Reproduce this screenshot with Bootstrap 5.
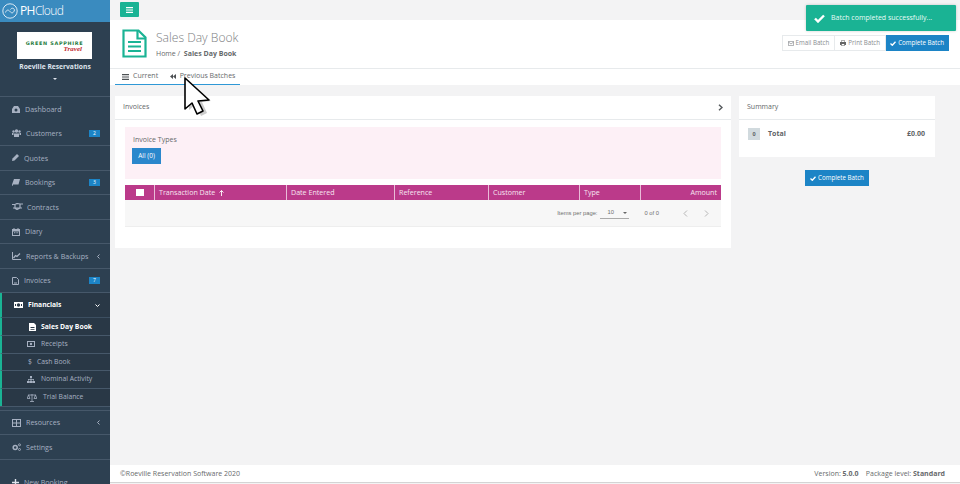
<!DOCTYPE html>
<html lang="en">
<head>
    <meta charset="UTF-8">
    <meta name="viewport" content="width=device-width, initial-scale=1">
    <title>Sales Day Book</title>
    <link href="https://cdn.jsdelivr.net/npm/bootstrap@5.3.3/dist/css/bootstrap.min.css" rel="stylesheet">
    <style>
        html, body { height: 484px; overflow: hidden; }
        body { background: #f3f3f4; color: #676a6c; font-family: "Open Sans", "Liberation Sans", sans-serif; font-size: 7px; }
        svg { display: block; flex: none; }
        .shell { height: 484px; }
        .side { width: 110px; height: 484px; background: #2d4051; color: #a7b1c2; overflow: hidden; flex: none; font-size: 7.1px; }
        .side-logo { height: 22px; flex: none; background: #3a8bbf; color: #fff; font-size: 12px; letter-spacing: -.6px; padding-left: 2px; gap: 2px; }
        .side-logo span { font-weight: 300; }
        .side-profile { height: 75px; flex: none; padding-top: 10px; border-bottom: 1px solid #46586a; color: #dfe4ed; font-weight: 700; font-size: 6.7px; }
        .brand-box { width: 75px; height: 27px; background: #fff; margin: 0 0 3px 17px; line-height: 1; padding-top: 3px; }
        .brand-top { color: #1e7a3c; font-size: 4.9px; font-weight: 800; letter-spacing: .7px; font-family: "DejaVu Sans", sans-serif; white-space: nowrap; }
        .brand-sub { color: #c1272d; font-size: 7px; font-style: italic; font-family: "Liberation Serif", serif; font-weight: 700; text-align: right; padding-right: 10px; }
        .caret-down { width: 0; height: 0; border: 2px solid transparent; border-top-color: #dfe4ed; border-bottom: 0; margin: 6px auto 0; }
        .menu-row { height: 24.55px; flex: none; border-bottom: 1px solid #46586a; padding: 0 10px 0 12px; gap: 5px; white-space: nowrap; }
        .menu-row.first { border: 0; }
        .menu-row.new-row { margin-top: 10px; }
        .menu-row.open { height: 25px; background: #293846; color: #fff; font-weight: 700; font-size: 6.7px; border-left: 2px solid #1ab394; padding-left: 12px; border-bottom-color: #3c4f61; }
        .sub-row { height: 17.6px; flex: none; background: #293846; border-bottom: 1px solid #46586a; border-left: 2px solid #1ab394; padding-left: 25px; gap: 6px; white-space: nowrap; font-size: 6.8px; }
        .sub-row.now { color: #fff; font-weight: 700; padding-left: 27px; gap: 5px; }
        .sub-row.cash { padding-left: 26px; gap: 5px; }
        .sub-row.end { border-bottom: 0; }
        .sub-end-gap { height: 4.5px; flex: none; border-top: 1px solid #46586a; border-bottom: 1px solid #46586a; }
        .count { background: #1c84c6; color: #fff; width: 11px; height: 7px; font-size: 5px; line-height: 7px; text-align: center; margin-left: auto; }
        .chev { margin-left: auto; }
        .main-col { min-width: 0; }
        .topline { height: 20px; padding: 2px 0 0 10px; }
        .menu-btn { width: 19px; height: 15px; background: #1ab394; border-radius: 1px; }
        .page-head { height: 48px; background: #fff; padding: 9px 11px 0 12px; gap: 9px; }
        .page-title { font-size: 12.1px; font-weight: 300; color: #7d8083; line-height: 17px; }
        .crumbs { font-size: 7px; line-height: 10px; margin-top: 3px; }
        .btn-strip { margin-top: 6px; }
        .strip-btn { height: 16px; font-size: 6.2px; padding: 0 5px; gap: 2px; background: #fff; border: 1px solid #e7eaec; color: #8a8d90; white-space: nowrap; }
        .strip-btn + .strip-btn { border-left: 0; }
        .strip-btn.go { background: #1c84c6; border-color: #1c84c6; color: #fff; padding: 0 4px; }
        .tabbar { height: 17px; background: #fff; border-top: 1px solid #e7eaec; padding-left: 5px; }
        .tab-set { width: 125px; height: 16px; border-bottom: 1px solid #2f98d6; padding-left: 7px; gap: 11.5px; font-size: 7px; }
        .tab-one { gap: 4px; }
        .content-zone { padding: 11px 25px 0 5px; gap: 8px; }
        .panel-a { width: 616px; height: 152px; background: #fff; }
        .panel-head { height: 24px; border-bottom: 1px solid #e7eaec; padding: 0 8px; font-size: 7px; color: #63676a; }
        .panel-a-body { padding: 7px 10px 0; }
        .pink-box { height: 52px; background: #fdf0f6; padding: 8px 7px 0; }
        .types-label { line-height: 10px; margin-bottom: 3px; padding-left: 1px; }
        .all-btn { width: 29px; height: 16px; background: #2a87cc; color: #fff; line-height: 16px; text-align: center; font-size: 6.5px; }
        .grid-head { height: 15px; margin-top: 6px; background: #bb3a8a; color: #f6e6f1; font-size: 7.1px; }
        .cell { height: 15px; padding: 0 4px; border-right: 1px solid #e9bcd8; white-space: nowrap; }
        .cell:last-child { border: 0; flex: 1; justify-content: flex-end; }
        .tick { width: 8px; height: 7px; background: #fff; }
        .pager { height: 27px; background: #f7f7f7; border-bottom: 1px solid #eee; font-size: 5.8px; font-family: "Liberation Sans", sans-serif; color: #6f6f6f; padding-right: 12px; justify-content: flex-end; }
        .size-pick { width: 29px; height: 12px; border-bottom: 1px solid #aaa; margin: 0 15px 0 3px; padding: 0 2px 0 7px; justify-content: space-between; }
        .size-arrow { width: 0; height: 0; border: 2.5px solid transparent; border-top-color: #666; border-bottom: 0; }
        .panel-b { width: 196px; height: 61px; background: #fff; }
        .sum-row { padding: 8px 10px 0 9px; font-weight: 700; color: #5f6366; }
        .sum-num { width: 12px; height: 12px; background: #d1dade; text-align: center; line-height: 12px; font-size: 5.5px; margin-right: 8px; }
        .finish-btn { width: 64px; height: 16px; background: #1c84c6; color: #fff; margin: 13px auto 0; gap: 2px; font-size: 6.2px; justify-content: center; }
        .foot-bar { height: 18px; background: #fff; border-bottom: 1px solid #d4d4d4; padding: 2px 15px 0 10px; margin-bottom: 1px; font-size: 7px; }
        .toast-note { position: absolute; left: 806px; top: 5px; width: 150px; height: 26px; background: #1ab394; color: #e9fbf6; border-radius: 1px; padding-left: 8px; gap: 6px; font-size: 7px; box-shadow: 0 0 3px rgba(0,0,0,.2); }
        .pointer { position: absolute; left: 184px; top: 77px; }
    </style>
</head>
<body>
<div class="d-flex shell">
    <div class="side d-flex flex-column">
        <div class="side-logo d-flex align-items-center">
            <svg width="16" height="16" viewBox="0 0 16 16" fill="none" stroke="#dbeaf5" stroke-width="1"><circle cx="8" cy="8" r="7.2"/><path d="M3.500 9.500c1-3 3-3 4.500-1s3.500 2 4.500-1.500c-.5-2-3-2.500-4-.5"/></svg>
            <div>PH<span>Cloud</span></div>
        </div>
        <div class="side-profile text-center">
            <div class="brand-box d-flex flex-column justify-content-center">
                <div class="brand-top">GREEN SAPPHIRE</div>
                <div class="brand-sub">Travel</div>
            </div>
            <div>Roeville Reservations</div>
            <div class="caret-down"></div>
        </div>
        <div class="menu-row first d-flex align-items-center">
            <svg width="8" height="7" viewBox="0 0 8 7" fill="#a7b1c2"><path d="M0 7V3l2-3h4l2 3v4z"/><circle cx="4" cy="4" r="1.500" fill="#2d4051"/></svg>Dashboard
        </div>
        <div class="menu-row d-flex align-items-center">
            <svg width="9" height="8" viewBox="0 0 9 8" fill="#a7b1c2"><circle cx="4.500" cy="2" r="1.700"/><circle cx="1.500" cy="2.500" r="1.200"/><circle cx="7.500" cy="2.500" r="1.200"/><path d="M2 8V4.500h5V8zM0 6V4h1.500v2zM7.500 6V4H9v2z"/></svg>Customers<span class="count">2</span>
        </div>
        <div class="menu-row d-flex align-items-center">
            <svg width="7" height="7" viewBox="0 0 7 7" fill="#a7b1c2"><path d="M0 7l.5-2.500L5 0l2 2-4.500 4.500z"/></svg>Quotes
        </div>
        <div class="menu-row d-flex align-items-center">
            <svg width="8" height="7" viewBox="0 0 8 7" fill="#a7b1c2"><path d="M2 0h6L6.500 5.500H1L.5 7h6L6 7.500H0V5.500z"/></svg>Bookings<span class="count">3</span>
        </div>
        <div class="menu-row d-flex align-items-center" style="gap:4px">
            <svg width="11" height="7" viewBox="0 0 11 7" fill="none" stroke="#a7b1c2" stroke-width="1.200"><path d="M0 1.500h3l2-1 3 .5h3M1 5l1.500 0L5 6.500 8 5h2M3 1.500v3.500h5V1"/></svg>Contracts
        </div>
        <div class="menu-row d-flex align-items-center">
            <svg width="8" height="8" viewBox="0 0 8 8" fill="#a7b1c2"><path d="M0 1h1.500V0h1v1h3V0h1v1H8v7H0zM1 3.500V7h6V3.500z"/><path d="M2 4.200h1v1H2zM3.600 4.200h1v1h-1zM5.200 4.200h1v1h-1z"/></svg>Diary
        </div>
        <div class="menu-row d-flex align-items-center">
            <svg width="9" height="8" viewBox="0 0 9 8" fill="none" stroke="#a7b1c2"><path d="M.5 0v7.500H9"/><path d="M1.500 6L3.500 3.500l1.500 1L8 1.500" stroke-width="1.300"/></svg>Reports &amp; Backups
            <svg class="chev" width="3" height="5" viewBox="0 0 3 5" fill="none" stroke="#a7b1c2"><path d="M2.500.5L.5 2.500l2 2"/></svg>
        </div>
        <div class="menu-row d-flex align-items-center">
            <svg width="7" height="8" viewBox="0 0 7 8" fill="none" stroke="#a7b1c2"><path d="M.5.500h4l2 2v5h-6zM2 6h3"/></svg>Invoices<span class="count">7</span>
        </div>
        <div class="menu-row open d-flex align-items-center">
            <svg width="9" height="6" viewBox="0 0 9 6"><path d="M0 0h9v6H0z" fill="#fff"/><circle cx="4.500" cy="3" r="1.700" fill="#293846"/><path d="M1 2h1v2H1zM7 2h1v2H7z" fill="#293846"/></svg>Financials
            <svg class="chev" width="5" height="3" viewBox="0 0 5 3" fill="none" stroke="#fff"><path d="M.5.500l2 2 2-2"/></svg>
        </div>
        <div class="sub-row now d-flex align-items-center">
            <svg width="7" height="8" viewBox="0 0 7 8" fill="#fff"><path d="M0 0h5l2 2v6H0zM1.500 4v1h4V4zM1.500 6v.7h4V6z"/></svg>Sales Day Book
        </div>
        <div class="sub-row d-flex align-items-center">
            <svg width="8" height="6" viewBox="0 0 8 6" fill="#a7b1c2"><path d="M0 0h8v6H0zM1 1v4h6V1z"/><circle cx="4" cy="3" r="1.200"/></svg>Receipts
        </div>
        <div class="sub-row cash d-flex align-items-center"><span>$</span>Cash Book</div>
        <div class="sub-row d-flex align-items-center">
            <svg width="8" height="7" viewBox="0 0 8 7" fill="#a7b1c2"><path d="M3 0h2v2H4.300v1H7v2h1v2H5.500V5h1V3.700h-2V5h.8v2H2.700V5h.8V3.700h-2V5h1v2H0V5h1V3h2.700V2H3z"/></svg>Nominal Activity
        </div>
        <div class="sub-row end d-flex align-items-center">
            <svg width="10" height="8" viewBox="0 0 10 8" fill="none" stroke="#a7b1c2" stroke-width=".8"><path d="M5 0v7.500M3 7.500h4M1 1h8M.2 4.500L1.500 1l1.500 3.500zM7 4.500L8.500 1 9.800 4.500z"/></svg>Trial Balance
        </div>
        <div class="sub-end-gap"></div>
        <div class="menu-row d-flex align-items-center">
            <svg width="9" height="8" viewBox="0 0 9 8" fill="#a7b1c2"><path d="M0 0h9v8H0zM1 1v2.500h3V1zM5 1v2.500h3V1zM1 4.500V7h3V4.500zM5 4.500V7h3V4.500z"/></svg>Resources
            <svg class="chev" width="3" height="5" viewBox="0 0 3 5" fill="none" stroke="#a7b1c2"><path d="M2.500.5L.5 2.500l2 2"/></svg>
        </div>
        <div class="menu-row d-flex align-items-center">
            <svg width="9" height="8" viewBox="0 0 9 8" fill="none" stroke="#a7b1c2"><circle cx="3.200" cy="4.500" r="2" stroke-width="1.500"/><circle cx="7.500" cy="1.800" r="1" stroke-width=".9"/><circle cx="7.500" cy="6.500" r="1" stroke-width=".9"/></svg>Settings
        </div>
        <div class="menu-row first new-row d-flex align-items-center">
            <svg width="7" height="7" viewBox="0 0 7 7" fill="#dfe4ed"><path d="M2.800 0h1.400v2.800H7v1.400H4.200V7H2.800V4.200H0V2.800h2.800z"/></svg>New Booking
        </div>
    </div>

    <div class="main-col flex-grow-1 d-flex flex-column">
        <div class="topline">
            <div class="menu-btn d-flex align-items-center justify-content-center">
                <svg width="7" height="6" viewBox="0 0 7 6" fill="#fff"><path d="M0 0h7v1.200H0zM0 2.400h7v1.200H0zM0 4.800h7V6H0z"/></svg>
            </div>
        </div>
        <div class="page-head d-flex">
            <svg width="25" height="29" viewBox="0 0 25 29" fill="none" stroke="#1ab394" stroke-width="2.200"><path d="M1.500 1.500h15l7 7v19h-22z"/><path d="M15.500 1.500v8h8"/><path d="M6 13h13M6 17.500h13M6 22h13"/></svg>
            <div class="flex-grow-1">
                <div class="page-title">Sales Day Book</div>
                <div class="crumbs">Home&nbsp;/&nbsp; <b>Sales Day Book</b></div>
            </div>
            <div class="btn-strip d-flex align-self-start">
                <div class="strip-btn d-flex align-items-center">
                    <svg width="6" height="5" viewBox="0 0 6 5" fill="none" stroke="#8a8d90" stroke-width=".7"><path d="M.4.400h5.200v4.200H.4zM.4 1l2.600 2L5.600 1"/></svg>Email Batch
                </div>
                <div class="strip-btn d-flex align-items-center">
                    <svg width="6" height="6" viewBox="0 0 6 6" fill="#666"><path d="M1.500 0h3v2H6v3H4.700v1H1.300V5H0V2h1.500zM2 .5V2h2V.5zM1.800 4v1.500h2.400V4z"/></svg>Print Batch
                </div>
                <div class="strip-btn go d-flex align-items-center">
                    <svg width="6" height="5" viewBox="0 0 6 5" fill="none" stroke="#fff" stroke-width="1.300"><path d="M.5 2.500l1.800 1.800L5.500.7"/></svg>Complete Batch
                </div>
            </div>
        </div>
        <div class="tabbar">
            <div class="tab-set d-flex align-items-center">
                <div class="tab-one d-flex align-items-center">
                    <svg width="7" height="6" viewBox="0 0 7 6" fill="#4d5154"><path d="M0 0h7v1.200H0zM0 2.400h7v1.200H0zM0 4.800h7V6H0z"/></svg>Current
                </div>
                <div class="tab-one d-flex align-items-center">
                    <svg width="6" height="5" viewBox="0 0 6 5" fill="#4d5154"><path d="M3 0v5L0 2.500zM6 0v5L3 2.500z"/></svg>Previous Batches
                </div>
            </div>
        </div>
        <div class="content-zone d-flex align-items-start flex-grow-1">
            <div class="panel-a">
                <div class="panel-head d-flex align-items-center justify-content-between">
                    <span>Invoices</span>
                    <svg width="5" height="7" viewBox="0 0 5 7" fill="none" stroke="#55595c" stroke-width="1.400"><path d="M1 .7l3 2.800-3 2.800"/></svg>
                </div>
                <div class="panel-a-body">
                    <div class="pink-box">
                        <div class="types-label">Invoice Types</div>
                        <div class="all-btn">All (0)</div>
                    </div>
                    <div class="grid-head d-flex">
                        <div class="cell d-flex align-items-center justify-content-center" style="width:30px"><div class="tick"></div></div>
                        <div class="cell d-flex align-items-center gap-1" style="width:132px">Transaction Date
                            <svg width="5" height="6" viewBox="0 0 5 6" fill="none" stroke="#fff" stroke-width=".9"><path d="M2.500 6V.7M.5 2.500l2-2 2 2"/></svg>
                        </div>
                        <div class="cell d-flex align-items-center" style="width:108px">Date Entered</div>
                        <div class="cell d-flex align-items-center" style="width:94px">Reference</div>
                        <div class="cell d-flex align-items-center" style="width:91px">Customer</div>
                        <div class="cell d-flex align-items-center" style="width:61px">Type</div>
                        <div class="cell d-flex align-items-center">Amount</div>
                    </div>
                    <div class="pager d-flex align-items-center">
                        <span>Items per page:</span>
                        <div class="size-pick d-flex align-items-center"><span>10</span><span class="size-arrow"></span></div>
                        <span>0 of 0</span>
                        <svg class="ms-4" width="5" height="7" viewBox="0 0 5 7" fill="none" stroke="#b5b5b5"><path d="M4 .5l-3 3 3 3"/></svg>
                        <svg class="ms-3" width="5" height="7" viewBox="0 0 5 7" fill="none" stroke="#b5b5b5"><path d="M1 .5l3 3-3 3"/></svg>
                    </div>
                </div>
            </div>
            <div>
                <div class="panel-b">
                    <div class="panel-head d-flex align-items-center">Summary</div>
                    <div class="sum-row d-flex align-items-center">
                        <div class="sum-num">0</div>
                        <div class="flex-grow-1">Total</div>
                        <div>£0.00</div>
                    </div>
                </div>
                <div class="finish-btn d-flex align-items-center">
                    <svg width="6" height="5" viewBox="0 0 6 5" fill="none" stroke="#fff" stroke-width="1.300"><path d="M.5 2.500l1.800 1.800L5.500.7"/></svg>Complete Batch
                </div>
            </div>
        </div>
        <div class="foot-bar d-flex align-items-center justify-content-between">
            <div>©Roeville Reservation Software 2020</div>
            <div>Version: <b>5.0.0</b> &nbsp;&nbsp; Package level: <b>Standard</b></div>
        </div>
    </div>
</div>

<div class="toast-note d-flex align-items-center">
    <svg width="11" height="9" viewBox="0 0 11 9" fill="none" stroke="#fff" stroke-width="2.400"><path d="M1 4.500l3 3L10 1.500"/></svg>
    <span>Batch completed successfully...</span>
</div>

<svg class="pointer" width="30" height="44" viewBox="0 0 30 44">
    <path d="M5 7l0 26 7-6 5 12 6-3-5-11 9-1z" fill="#aaa" opacity=".6"/>
    <path d="M1 1v31l7-6 5 11 6-3-5-10 11-1z" fill="#fff" stroke="#000" stroke-width="1.600" stroke-linejoin="round"/>
</svg>
</body>
</html>
